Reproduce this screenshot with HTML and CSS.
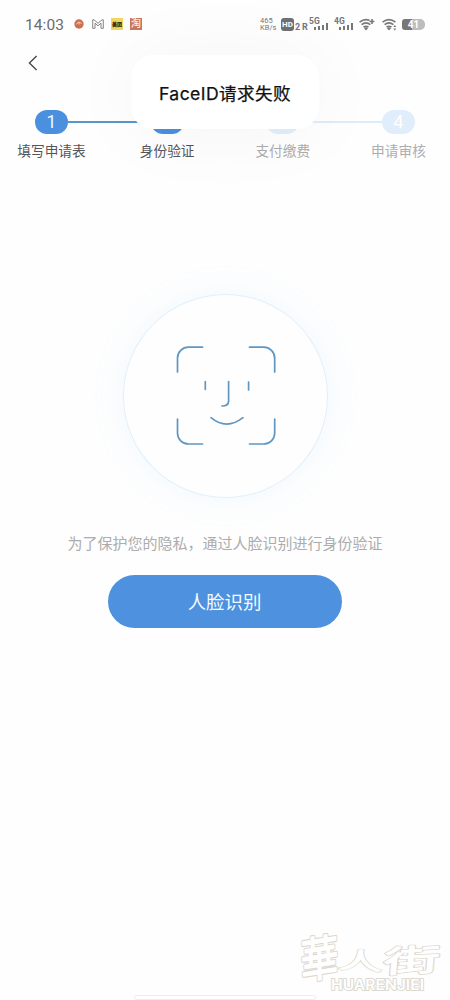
FILE: index.html
```html
<!DOCTYPE html>
<html lang="zh-CN">
<head>
<meta charset="utf-8">
<title>身份验证</title>
<link rel="stylesheet" href="styles.css">
</head>
<body>
<div class="screen">
  <header class="status">
    <span class="clock">14:03</span>
    <svg class="app-icon" width="10" height="10" viewBox="0 0 10 10"><circle cx="5" cy="5" r="4.7" fill="#cf6f50"/><path d="M2.5 5.3Q4.5 1.5 7.5 4.5M5 3v2.5" stroke="#ffd9c4" fill="none" stroke-width=".9"/></svg>
    <svg class="app-icon gmail" width="12" height="10" viewBox="0 0 12 10"><path d="M.7 9.3V.8H2L6 4.300 10 .8h1.300v8.500H9V4.200L6 6.800 3 4.200v5.100z" fill="none" stroke="#777" stroke-width=".9"/></svg>
    <span class="app-icon tile yellow">美团</span>
    <span class="app-icon tile red">淘</span>
    <div class="signals">
      <span class="speed">465<br>KB/s</span>
      <span class="hd">HD</span><span class="sub">2</span><span class="roam">R</span>
      <svg class="cell first" width="20" height="14" viewBox="0 0 20 14"><text x="0" y="6.500">5G</text><path d="M5 10h2v3H5zM9 9h2v4H9zM13 8h2v5h-2zM17 6h2v7h-2z"/></svg>
      <svg class="cell" width="20" height="14" viewBox="0 0 20 14"><text x="0" y="6.500">4G</text><path d="M5 10h2v3H5zM9 9h2v4H9zM13 8h2v5h-2zM17 6h2v7h-2z"/></svg>
      <svg class="wifi" width="16" height="13" viewBox="0 0 16 13"><path d="M.6 4.200Q7-1 13.400 4.200M2.600 6.700Q7 3 11.400 6.700M4.500 9.200Q7 7.200 9.500 9.200"/><path class="solid" d="M4.800 10Q7 8.500 9.200 10L7 12.600z"/><path class="gap" d="M13 0v6M10.500 3.300h5.500"/><path d="M13 1v5M10.600 3.500h4.800"/></svg>
      <svg class="wifi last" width="16" height="13" viewBox="0 0 16 13"><path d="M.6 4.200Q7-1 13.400 4.200M2.600 6.700Q7 3 11.400 6.700M4.500 9.200Q7 7.200 9.500 9.200"/><path class="solid" d="M4.800 10Q7 8.500 9.200 10L7 12.600zM12.800 7l1.500 2h-3zM12.800 12.500l1.500-2h-3z"/></svg>
      <span class="battery">41</span>
    </div>
  </header>

  <nav class="nav">
    <svg width="10" height="16" viewBox="0 0 10 16"><path d="M8.600 1L1.400 8l7.200 7" fill="none" stroke="#444" stroke-width="1.300"/></svg>
  </nav>

  <section class="steps">
    <div class="track">
      <span class="pill">1</span><i class="line"></i>
      <span class="pill">2</span><i class="line todo"></i>
      <span class="pill todo">3</span><i class="line todo"></i>
      <span class="pill todo">4</span>
    </div>
    <div class="labels">
      <span>填写申请表</span><span>身份验证</span><span class="muted">支付缴费</span><span class="muted">申请审核</span>
    </div>
  </section>

  <main class="verify">
    <div class="ring">
      <svg width="100" height="100" viewBox="0 0 100 100" fill="none" stroke="#5f97c2" stroke-width="1.7" stroke-linecap="round">
        <path d="M1.500 26V12.200A11 11 0 0 1 12.500 1.200H26.500M73.500 1.200H87.700A11 11 0 0 1 98.700 12.200V26M98.700 73V87A11 11 0 0 1 87.700 98H73.500M26.500 98H12.500A11 11 0 0 1 1.500 87V73"/>
        <path d="M29.300 35.500V43.300M72.600 36V44M52.600 35.500V55Q52.600 60 46 60M35 71.700Q50.500 84.500 67 71.700"/>
      </svg>
    </div>
    <p class="hint">为了保护您的隐私，通过人脸识别进行身份验证</p>
    <button class="start">人脸识别</button>
  </main>

  <div class="toast">FaceID请求失败</div>

  <svg class="watermark" width="164" height="80" viewBox="-14 -14 164 80">
    <g class="edge">
      <text class="brush" transform="translate(1 49) rotate(-9) skewX(-8) scale(.95 1.180)">華</text>
      <text class="brush" transform="translate(38 38) rotate(3) scale(1.100 .580)">人</text>
      <text class="brush" transform="translate(83 43) rotate(-3) skewX(-8) scale(1.400 .760)">街</text>
      <text class="latin" x="31" y="60" textLength="93" lengthAdjust="spacingAndGlyphs">HUARENJIEI</text>
    </g>
    <g class="face">
      <text class="brush" transform="translate(1 49) rotate(-9) skewX(-8) scale(.95 1.180)">華</text>
      <text class="brush" transform="translate(38 38) rotate(3) scale(1.100 .580)">人</text>
      <text class="brush" transform="translate(83 43) rotate(-3) skewX(-8) scale(1.400 .760)">街</text>
      <text class="latin" x="31" y="60" textLength="93" lengthAdjust="spacingAndGlyphs">HUARENJIEI</text>
    </g>
  </svg>
  <div class="homebar"></div>
</div>
</body>
</html>
```
FILE: styles.css
```css
* { box-sizing: border-box; }
body { margin: 0; background: #fefefe; font-family: Roboto, "Noto Sans CJK SC", sans-serif; }
.screen { position: relative; width: 450px; height: 1000px; overflow: hidden; background: #fefefe; }

.status { display: flex; align-items: center; height: 48px; padding: 0 25px; color: #777; }
.clock { width: 39px; font-size: 15.5px; line-height: 20px; letter-spacing: .1px; color: #6c6c6c; padding-top: 1px; }
.app-icon { flex: none; margin-left: 10px; }
.app-icon.gmail { margin-left: 8px; }
.tile { width: 12px; height: 12px; font-weight: 900; line-height: 12px; text-align: center; white-space: nowrap; }
.tile.yellow { margin-left: 7px; background: #f2d560; color: #2d2508; font-size: 5px; }
.tile.red { margin-left: 7px; background: #cb775f; color: #fff0e8; font-size: 10px; font-weight: 500; }
.signals { display: flex; align-items: center; height: 14px; margin-left: auto; }
.speed { width: 15px; margin-right: 6px; font-size: 7.5px; line-height: 7px; white-space: nowrap; }
.hd { width: 13px; height: 13px; border-radius: 3px; background: #707070; color: #fff; font-size: 8px; font-weight: 700; line-height: 13px; text-align: center; }
.sub, .roam { align-self: flex-end; width: 7px; padding-left: 1px; font-size: 9px; font-weight: 700; line-height: 8px; }
.roam { margin-left: 1px; padding-left: 0; }
.cell { margin-left: 5px; fill: #777; }
.cell.first { margin-left: 0; }
.cell text { font-size: 8.5px; font-weight: 700; }
.wifi { margin-left: 5px; fill: none; stroke: #777; stroke-width: 1.6; }
.wifi.last { margin-left: 7px; }
.wifi .solid { fill: #777; stroke: none; }
.wifi .gap { stroke: #fefefe; stroke-width: 2.6; }
.battery { width: 23px; height: 11px; margin-left: 4px; border-radius: 3px 5px 5px 3px; background: linear-gradient(90deg, #777 42%, #bdbdbd 42%); color: #fff; font-size: 10px; font-weight: 700; line-height: 11.5px; text-align: center; }

.nav { height: 62px; padding: 7px 28px; }
.nav svg { display: block; }

.track { display: flex; align-items: center; padding: 0 35px; }
.pill { width: 33px; height: 24px; border-radius: 12px; background: #4a90df; color: #eef9ff; font-size: 17.5px; line-height: 25px; text-align: center; }
.pill.todo { background: #e0eefc; color: #fff; }
.line { flex: 1; height: 2px; background: #5797cd; }
.line.todo { background: #dfecf8; }
.labels { display: flex; justify-content: space-between; padding: 7px 16.5px 0; color: #55555a; font-size: 13.7px; line-height: 20px; }
.labels span { width: 70px; text-align: center; white-space: nowrap; }
.labels .muted { color: #adadaf; }

.verify { display: flex; flex-direction: column; align-items: center; padding-top: 133px; }
.ring { display: grid; place-items: center; width: 205px; height: 204px; padding-left: 1px; border: 1px solid #e0f0f9; border-radius: 50%; background: #fefefe; box-shadow: 0 0 36px rgba(100, 185, 245, .09); }
.hint { margin: 34px 0 0; color: #acacac; font-size: 15px; line-height: 24px; }
.start { width: 234px; height: 53px; margin-top: 19px; padding: 0 1px 0 0; border: 0; border-radius: 27px; background: #4d91df; color: #f5fcff; font: 400 18.4px/53px "Noto Sans CJK SC", sans-serif; }

.toast { position: absolute; left: 131px; top: 55px; width: 188px; height: 74px; border-radius: 22px; background: #fff; box-shadow: 0 2px 80px rgba(0, 0, 0, .045); color: #111; font: 400 17.6px/77px Inter, "Noto Sans CJK SC", sans-serif; letter-spacing: .4px; -webkit-text-stroke: .25px #111; text-align: center; white-space: nowrap; }
.watermark { position: absolute; left: 286px; top: 916px; }
.watermark text { stroke-linejoin: round; }
.brush { font: 400 40px "Noto Sans CJK TC", sans-serif; }
.latin { font: 600 14px Inter, sans-serif; }
.edge { fill: #dcd8cf; stroke: #dcd8cf; stroke-width: 3.2; }
.face { fill: #fff; stroke: #fff; stroke-width: 1.3; }
.edge .latin { stroke-width: 1.8; }
.face .latin { stroke-width: 0; }
.homebar { position: absolute; left: 134px; top: 995px; width: 182px; height: 5px; border: 1px solid #ededed; border-radius: 3px; background: #fff; }
```
